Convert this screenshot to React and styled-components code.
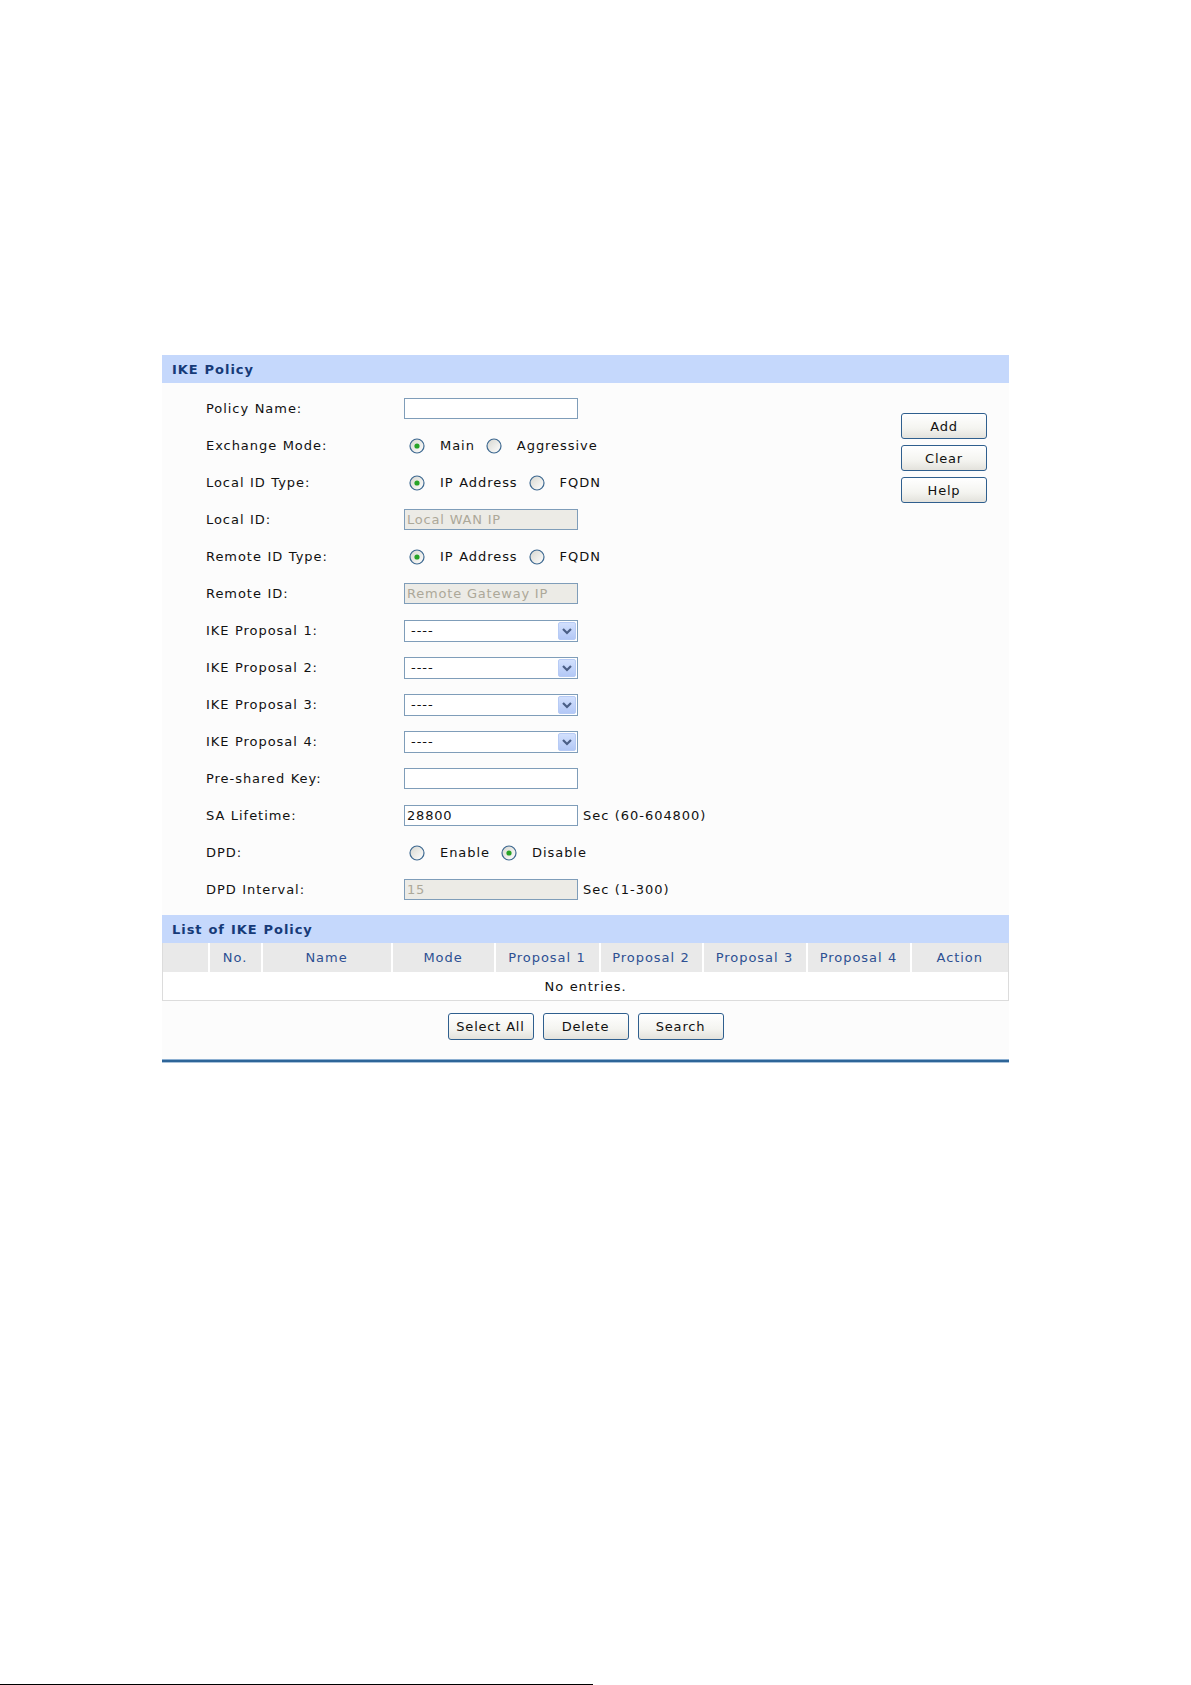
import React from "react";
import styled, { createGlobalStyle } from "styled-components";

const Global = createGlobalStyle`
  html, body { margin: 0; padding: 0; background: #ffffff; }
  body { font-family: "DejaVu Sans", Verdana, sans-serif; }
`;

const Page = styled.div`
  position: relative;
  height: 1685px;
  display: flex;
  flex-direction: column;
  box-sizing: border-box;
  padding-top: 355px;
`;

const Panel = styled.div`
  margin-left: 162px;
  width: 847px;
  background: #fcfcfc;
  font-size: 13px;
  letter-spacing: 0.95px;
  word-spacing: 0.5px;
  color: #111;
`;

const SectionHead = styled.div`
  height: 28px;
  background: #c5d8fc;
  color: #163a78;
  font-weight: bold;
  display: flex;
  align-items: center;
  padding-left: 10px;
`;

const FormArea = styled.div`
  display: flex;
  padding: 7px 0;
`;

const Rows = styled.div`
  flex: 1;
  display: flex;
  flex-direction: column;
`;

const Row = styled.div`
  height: 37px;
  display: flex;
  align-items: center;
`;

const Label = styled.div`
  width: 198px;
  padding-left: 44px;
  box-sizing: content-box;
  flex: none;
`;

const Control = styled.div`
  display: flex;
  align-items: center;
`;

const TextInput = styled.input`
  box-sizing: border-box;
  width: 174px;
  height: 21px;
  border: 1px solid #7f9db9;
  background: ${(p) => (p.disabled ? "#ecebe6" : "#ffffff")};
  color: ${(p) => (p.disabled ? "#aca899" : "#111")};
  font-family: inherit;
  font-size: 13px;
  letter-spacing: 0.8px;
  padding: 0 2px;
  margin: 0;
  outline: none;
  &::placeholder { color: #aca899; opacity: 1; }
`;

const Hint = styled.span`
  margin-left: 5px;
`;

const RadioItem = styled.label`
  display: flex;
  align-items: center;
  margin-right: 11px;
  margin-left: ${(p) => (p.first ? "5px" : "0")};
`;

const RadioText = styled.span`
  margin-left: 15px;
`;

const SelectBox = styled.div`
  box-sizing: border-box;
  width: 174px;
  height: 22px;
  border: 1px solid #7f9db9;
  background: #fff;
  display: flex;
  align-items: center;
  justify-content: space-between;
  padding: 0 1px 0 6px;
`;

const DropBtn = styled.span`
  box-sizing: border-box;
  width: 18px;
  height: 18px;
  border: 1px solid #b7cbf5;
  border-radius: 2px;
  background: linear-gradient(#d2e0fd, #b3c8f6);
  display: flex;
  align-items: center;
  justify-content: center;
`;

const Aside = styled.div`
  width: 108px;
  display: flex;
  flex-direction: column;
  gap: 6px;
  padding-top: 23px;
`;

const Button = styled.button`
  box-sizing: border-box;
  width: ${(p) => p.w || 86}px;
  height: ${(p) => p.h || 26}px;
  border: 1px solid #2f5f8e;
  border-radius: 3px;
  background: linear-gradient(#ffffff 0%, #f4f4f0 60%, #e3e2dc 100%);
  font-family: inherit;
  font-size: 13px;
  letter-spacing: 0.8px;
  color: #111;
  padding: 0;
  cursor: pointer;
`;

const Table = styled.table`
  width: 100%;
  border-collapse: collapse;
  table-layout: fixed;
  border: 1px solid #dcdcdc;
  border-top: none;
`;

const Th = styled.th`
  height: 29px;
  background: #e9e9e9;
  color: #2d5093;
  font-weight: normal;
  border-left: 2px solid #ffffff;
  padding: 0;
  &:first-child { border-left: none; }
`;

const Td = styled.td`
  height: 28px;
  background: #ffffff;
  text-align: center;
  padding: 0;
`;

const ButtonBar = styled.div`
  display: flex;
  justify-content: center;
  gap: 9px;
  padding: 12px 0 19px;
`;

const BottomRule = styled.div`
  height: 2px;
  background: #2e6598;
  border-top: 1px solid #8db0d2;
  border-bottom: 1px solid #a9c2da;
`;

const FooterRule = styled.div`
  margin-top: auto;
  width: 593px;
  height: 1px;
  background: #000;
`;

const Radio = ({ checked }) => (
  <svg width="16" height="16" viewBox="0 0 16 16">
    <defs>
      <linearGradient id="rgrad" x1="0" y1="0" x2="1" y2="1">
        <stop offset="0" stopColor="#d6d6cf" />
        <stop offset="1" stopColor="#ffffff" />
      </linearGradient>
    </defs>
    <circle cx="8" cy="8" r="7" fill="url(#rgrad)" stroke="#3d6890" strokeWidth="1.2" />
    {checked && <circle cx="8" cy="8" r="2.6" fill="#27a327" />}
  </svg>
);

const RadioGroup = ({ options, selected }) => (
  <Control>
    {options.map((o, i) => (
      <RadioItem key={o} first={i === 0}>
        <Radio checked={i === selected} />
        <RadioText>{o}</RadioText>
      </RadioItem>
    ))}
  </Control>
);

const Select = () => (
  <SelectBox>
    <span>----</span>
    <DropBtn>
      <svg width="12" height="10" viewBox="0 0 12 10">
        <polyline points="2,3 6,7 10,3" fill="none" stroke="#4b5f86" strokeWidth="2.2" />
      </svg>
    </DropBtn>
  </SelectBox>
);

const columns = [
  ["", 46],
  ["No.", 53],
  ["Name", 130],
  ["Mode", 103],
  ["Proposal 1", 105],
  ["Proposal 2", 103],
  ["Proposal 3", 104],
  ["Proposal 4", 104],
  ["Action", null],
];

export default function App() {
  return (
    <Page>
      <Global />
      <Panel>
        <SectionHead>IKE Policy</SectionHead>
        <FormArea>
          <Rows>
            <Row>
              <Label>Policy Name:</Label>
              <TextInput />
            </Row>
            <Row>
              <Label>Exchange Mode:</Label>
              <RadioGroup options={["Main", "Aggressive"]} selected={0} />
            </Row>
            <Row>
              <Label>Local ID Type:</Label>
              <RadioGroup options={["IP Address", "FQDN"]} selected={0} />
            </Row>
            <Row>
              <Label>Local ID:</Label>
              <TextInput disabled placeholder="Local WAN IP" />
            </Row>
            <Row>
              <Label>Remote ID Type:</Label>
              <RadioGroup options={["IP Address", "FQDN"]} selected={0} />
            </Row>
            <Row>
              <Label>Remote ID:</Label>
              <TextInput disabled placeholder="Remote Gateway IP" />
            </Row>
            {[1, 2, 3, 4].map((n) => (
              <Row key={n}>
                <Label>IKE Proposal {n}:</Label>
                <Select />
              </Row>
            ))}
            <Row>
              <Label>Pre-shared Key:</Label>
              <TextInput />
            </Row>
            <Row>
              <Label>SA Lifetime:</Label>
              <TextInput defaultValue="28800" />
              <Hint>Sec (60-604800)</Hint>
            </Row>
            <Row>
              <Label>DPD:</Label>
              <RadioGroup options={["Enable", "Disable"]} selected={1} />
            </Row>
            <Row>
              <Label>DPD Interval:</Label>
              <TextInput disabled defaultValue="15" />
              <Hint>Sec (1-300)</Hint>
            </Row>
          </Rows>
          <Aside>
            <Button>Add</Button>
            <Button>Clear</Button>
            <Button>Help</Button>
          </Aside>
        </FormArea>
        <SectionHead>List of IKE Policy</SectionHead>
        <Table>
          <colgroup>
            {columns.map(([n, w], i) => (
              <col key={i} style={w ? { width: w } : undefined} />
            ))}
          </colgroup>
          <thead>
            <tr>
              {columns.map(([n], i) => (
                <Th key={i}>{n}</Th>
              ))}
            </tr>
          </thead>
          <tbody>
            <tr>
              <Td colSpan={9}>No entries.</Td>
            </tr>
          </tbody>
        </Table>
        <ButtonBar>
          <Button w={86} h={27}>Select All</Button>
          <Button w={86} h={27}>Delete</Button>
          <Button w={86} h={27}>Search</Button>
        </ButtonBar>
        <BottomRule />
      </Panel>
      <FooterRule />
    </Page>
  );
}
